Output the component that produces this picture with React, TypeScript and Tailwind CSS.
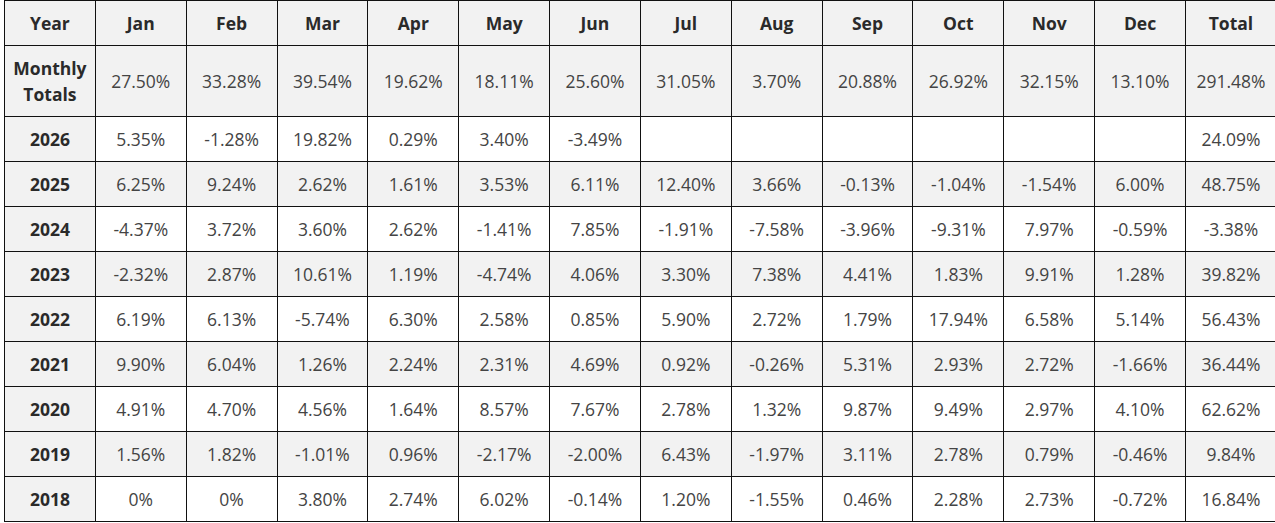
import React from "react";

const months = ["Jan","Feb","Mar","Apr","May","Jun","Jul","Aug","Sep","Oct","Nov","Dec"];

const monthly = ["27.50%","33.28%","39.54%","19.62%","18.11%","25.60%","31.05%","3.70%","20.88%","26.92%","32.15%","13.10%","291.48%"];

const rows: [string, string[]][] = [
  ["2026", ["5.35%","-1.28%","19.82%","0.29%","3.40%","-3.49%","","","","","","","24.09%"]],
  ["2025", ["6.25%","9.24%","2.62%","1.61%","3.53%","6.11%","12.40%","3.66%","-0.13%","-1.04%","-1.54%","6.00%","48.75%"]],
  ["2024", ["-4.37%","3.72%","3.60%","2.62%","-1.41%","7.85%","-1.91%","-7.58%","-3.96%","-9.31%","7.97%","-0.59%","-3.38%"]],
  ["2023", ["-2.32%","2.87%","10.61%","1.19%","-4.74%","4.06%","3.30%","7.38%","4.41%","1.83%","9.91%","1.28%","39.82%"]],
  ["2022", ["6.19%","6.13%","-5.74%","6.30%","2.58%","0.85%","5.90%","2.72%","1.79%","17.94%","6.58%","5.14%","56.43%"]],
  ["2021", ["9.90%","6.04%","1.26%","2.24%","2.31%","4.69%","0.92%","-0.26%","5.31%","2.93%","2.72%","-1.66%","36.44%"]],
  ["2020", ["4.91%","4.70%","4.56%","1.64%","8.57%","7.67%","2.78%","1.32%","9.87%","9.49%","2.97%","4.10%","62.62%"]],
  ["2019", ["1.56%","1.82%","-1.01%","0.96%","-2.17%","-2.00%","6.43%","-1.97%","3.11%","2.78%","0.79%","-0.46%","9.84%"]],
  ["2018", ["0%","0%","3.80%","2.74%","6.02%","-0.14%","1.20%","-1.55%","0.46%","2.28%","2.73%","-0.72%","16.84%"]],
];

export default function App() {
  return (
    <div className="w-[1275px] h-[523px] overflow-hidden bg-white" style={{ fontFamily: '"Open Sans", "Noto Sans", sans-serif' }}>
      <table className="table-fixed border-collapse w-[1273px] ml-[4px] text-[17.5px] leading-[26px]">
        <thead>
          <tr className="bg-[#f2f2f2]">
            <th className="border border-[#111] py-[9px] px-1 font-bold text-[#2a2a2a] text-center">Year</th>
            {months.map((m) => (
              <th key={m} className="border border-[#111] py-[9px] px-1 font-bold text-[#2a2a2a] text-center">{m}</th>
            ))}
            <th className="border border-[#111] py-[9px] px-1 font-bold text-[#2a2a2a] text-center">Total</th>
          </tr>
        </thead>
        <tbody>
          <tr className="bg-[#f2f2f2]">
            <td className="border border-[#111] py-[9px] px-1 font-bold text-[#2a2a2a] text-center">Monthly Totals</td>
            {monthly.map((v, i) => (
              <td key={i} className="border border-[#111] py-[9px] px-1 text-[#444] text-center">{v}</td>
            ))}
          </tr>
          {rows.map(([year, vals], ri) => (
            <tr key={year} className={ri % 2 === 1 ? "bg-[#f2f2f2]" : "bg-white"}>
              <td className="border border-[#111] py-[9px] px-1 font-bold text-[#2a2a2a] text-center bg-[#f2f2f2]">{year}</td>
              {vals.map((v, i) => (
                <td key={i} className="border border-[#111] py-[9px] px-1 text-[#444] text-center">{v}</td>
              ))}
            </tr>
          ))}
        </tbody>
      </table>
    </div>
  );
}
